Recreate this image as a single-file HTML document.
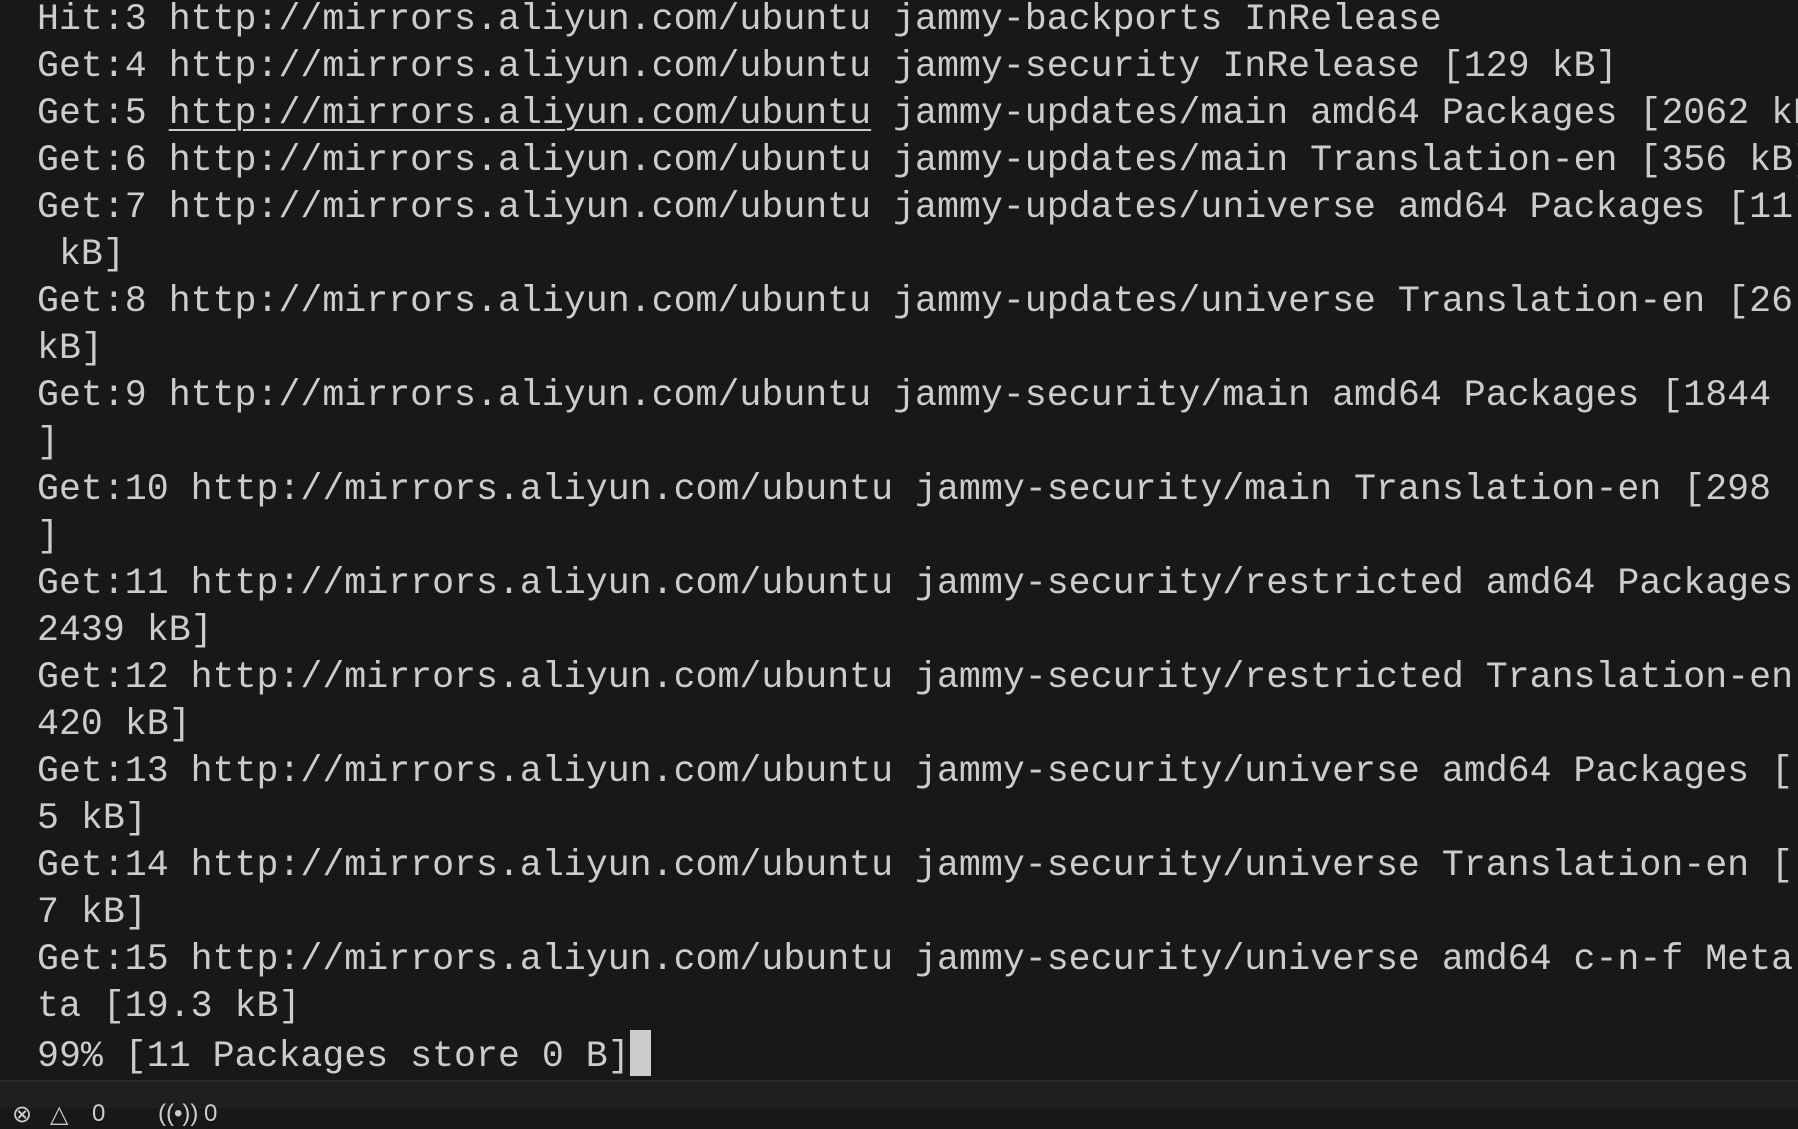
<!DOCTYPE html>
<html><head><meta charset="utf-8"><style>
html,body{margin:0;padding:0;width:1798px;height:1106px;overflow:hidden;background:#181818;}
pre{position:absolute;left:37px;top:-4px;margin:0;font-family:"Liberation Mono",monospace;font-size:36.6px;line-height:47px;color:#cccccc;white-space:pre;}
.u{text-decoration:underline;text-underline-offset:6px;text-decoration-thickness:2px;}
.cur{display:inline-block;width:21px;height:46px;background:#cccccc;vertical-align:-10px;}
.sb{position:absolute;left:0;top:1080px;width:1798px;height:26px;background:#1f1f1f;border-top:2px solid #2b2b2b;}
.sb span{position:absolute;top:18px;color:#cccccc;font:24px "Liberation Sans",sans-serif;}
</style></head><body>
<pre>Hit:3 http://mirrors.aliyun.com/ubuntu jammy-backports InRelease
Get:4 http://mirrors.aliyun.com/ubuntu jammy-security InRelease [129 kB]
Get:5 <span class="u">http://mirrors.aliyun.com/ubuntu</span> jammy-updates/main amd64 Packages [2062 kB]
Get:6 http://mirrors.aliyun.com/ubuntu jammy-updates/main Translation-en [356 kB]
Get:7 http://mirrors.aliyun.com/ubuntu jammy-updates/universe amd64 Packages [11
 kB]
Get:8 http://mirrors.aliyun.com/ubuntu jammy-updates/universe Translation-en [26
kB]
Get:9 http://mirrors.aliyun.com/ubuntu jammy-security/main amd64 Packages [1844
]
Get:10 http://mirrors.aliyun.com/ubuntu jammy-security/main Translation-en [298
]
Get:11 http://mirrors.aliyun.com/ubuntu jammy-security/restricted amd64 Packages
2439 kB]
Get:12 http://mirrors.aliyun.com/ubuntu jammy-security/restricted Translation-en
420 kB]
Get:13 http://mirrors.aliyun.com/ubuntu jammy-security/universe amd64 Packages [
5 kB]
Get:14 http://mirrors.aliyun.com/ubuntu jammy-security/universe Translation-en [
7 kB]
Get:15 http://mirrors.aliyun.com/ubuntu jammy-security/universe amd64 c-n-f Meta
ta [19.3 kB]
99% [11 Packages store 0 B]<span class="cur"></span></pre>
<div class="sb"><span style="left:12px">⊗</span><span style="left:50px">△</span><span style="left:92px">0</span><span style="left:158px">((•))</span><span style="left:204px">0</span></div>
</body></html>
